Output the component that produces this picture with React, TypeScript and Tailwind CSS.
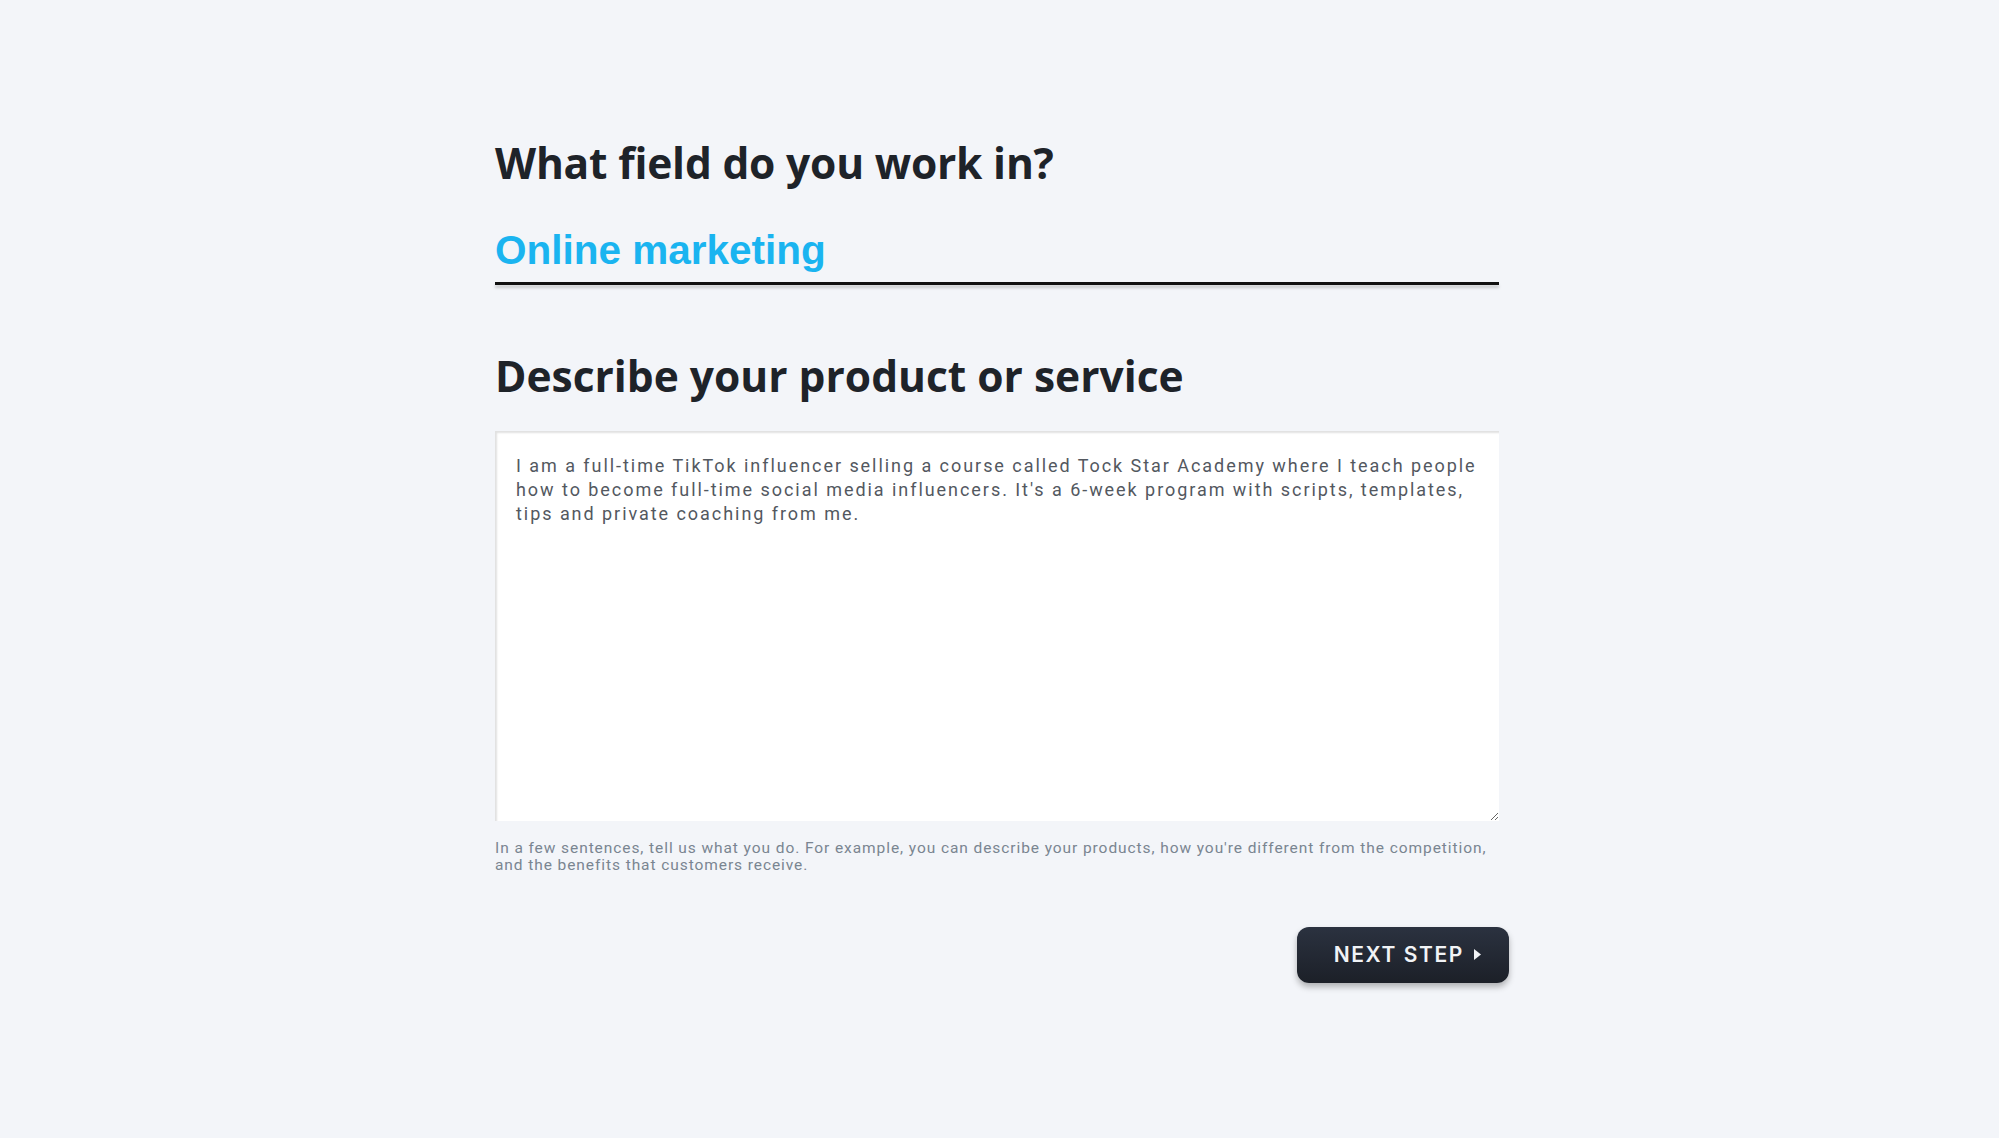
import React from "react";

const DESC =
  "I am a full-time TikTok influencer selling a course called Tock Star Academy where I teach people how to become full-time social media influencers. It's a 6-week program with scripts, templates, tips and private coaching from me.";

export default function App() {
  return (
    <div className="min-h-screen w-full bg-[#f3f5f9] pt-[142px]">
      <div className="ml-[495px] w-[1004px]">
        <h1 className="font-['Open_Sans',sans-serif] text-[42.5px] font-bold leading-none tracking-[-0.2px] text-[#1e2329]">
          What field do you work in?
        </h1>

        <div className="mt-[45px]">
          <div className="pb-[12px] font-['Liberation_Sans',Arial,sans-serif] text-[40.5px] font-bold leading-none text-[#1ab4f0]">
            Online marketing
          </div>
          <div className="h-[3px] w-full bg-[#111] shadow-[0_3px_3px_rgba(0,0,0,0.18)]" />
        </div>

        <h2 className="mt-[70px] font-['Open_Sans',sans-serif] text-[42.5px] font-bold leading-none text-[#1e2329]">
          Describe your product or service
        </h2>

        <textarea
          readOnly
          defaultValue={DESC}
          className="mt-[33px] block h-[390px] w-full resize-y border-0 bg-white pb-4 pl-[21px] pr-[16px] pt-[23px] font-['Roboto',sans-serif] text-[18px] leading-[24px] tracking-[1.95px] text-[#53585f] shadow-[inset_2px_2px_2px_rgba(0,0,0,0.12)] outline-none"
        />

        <p className="mt-[19px] font-['Roboto',sans-serif] text-[15.5px] leading-[17px] tracking-[0.92px] text-[#7a8591]">
          In a few sentences, tell us what you do. For example, you can describe your products, how
          you're different from the competition, and the benefits that customers receive.
        </p>

        <div className="mt-[53px] flex justify-end">
          <button className="-mr-[10px] flex h-[56px] items-center gap-[10px] rounded-[12px] bg-gradient-to-b from-[#2b3240] to-[#1c2028] pl-[37px] pr-[28px] font-['Inter',sans-serif] text-[21px] font-semibold tracking-[1.6px] text-[#f1f3f6] shadow-[0_4px_6px_rgba(0,0,0,0.28)]">
            <span>NEXT STEP</span>
            <svg width="7" height="11" viewBox="0 0 7 11" className="block">
              <path d="M0 0 L7 5.5 L0 11 Z" fill="#f1f3f6" />
            </svg>
          </button>
        </div>
      </div>
    </div>
  );
}
